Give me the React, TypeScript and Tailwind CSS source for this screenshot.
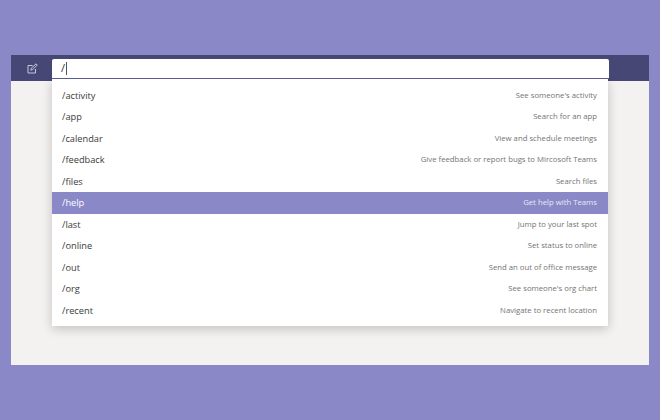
const rows: [string, string][] = [
  ["/activity", "See someone's activity"],
  ["/app", "Search for an app"],
  ["/calendar", "View and schedule meetings"],
  ["/feedback", "Give feedback or report bugs to Mircosoft Teams"],
  ["/files", "Search files"],
  ["/help", "Get help with Teams"],
  ["/last", "Jump to your last spot"],
  ["/online", "Set status to online"],
  ["/out", "Send an out of office message"],
  ["/org", "See someone's org chart"],
  ["/recent", "Navigate to recent location"],
];

export default function App() {
  return (
    <div className="w-[660px] h-[420px] bg-[#8b88c7] pt-[55px] pl-[11px] overflow-hidden font-['Open_Sans','Noto_Sans',sans-serif]">
      <div className="relative w-[638px] h-[310px] bg-[#f3f2f1]">
        <div className="h-[26px] bg-[#464775] flex items-center">
          <div className="w-[43px] flex justify-center">
            <svg width="11" height="11" viewBox="0 0 11 11" fill="none" stroke="#c9c8e0" strokeWidth="1">
              <path d="M8.5 6v4H1V2.5h4.5" />
              <path d="M3.8 7.2l.5-2L9 .8l1.2 1.3-4.6 4.6z" />
            </svg>
          </div>
        </div>
        <div className="absolute left-[41px] top-[4px] w-[557px] h-[20px] bg-white rounded-t-[2px] border-b border-[#5b5a94] pl-[9px] flex items-center text-[11px] text-[#333333] z-10">
          <span>/</span>
          <span className="w-px h-[13px] bg-[#555555] ml-px" />
        </div>
        <div className="absolute left-[41px] top-[24px] w-[556px] h-[247px] bg-white shadow-[0_3px_10px_rgba(0,0,0,0.2)] pt-[5.5px]">
          {rows.map(([cmd, desc]) => {
            const active = cmd === "/help";
            return (
              <div
                key={cmd}
                className={`h-[21.5px] flex items-center justify-between pl-[10px] pr-[11px] pt-px ${active ? "bg-[#8b88c7]" : ""}`}
              >
                <span className={`text-[9.25px] ${active ? "text-white" : "text-[#3b3a39]"}`}>{cmd}</span>
                <span className={`text-[7.75px] ${active ? "text-[#e8e7f5]" : "text-[#757473]"}`}>{desc}</span>
              </div>
            );
          })}
        </div>
      </div>
    </div>
  );
}
